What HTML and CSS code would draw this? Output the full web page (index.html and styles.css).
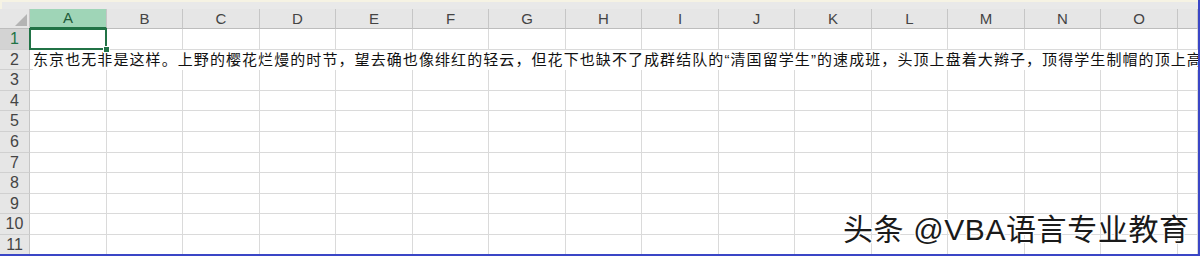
FILE: index.html
```html
<!DOCTYPE html>
<html lang="zh-CN">
    <head>
        <meta charset="UTF-8">
        <title>Sheet1</title>
        <link rel="stylesheet" href="styles.css">
    </head>

    <body>
        <div class="window">
            <div class="top-strip"></div>

            <div class="sheet" id="sheet"></div>

            <div class="watermark">头条 @VBA语言专业教育</div>
        </div>

        <script>
            let sheet = document.getElementById('sheet');
            let cols = ['A', 'B', 'C', 'D', 'E', 'F', 'G', 'H', 'I', 'J', 'K', 'L', 'M', 'N', 'O', ''];
            let text = '东京也无非是这样。上野的樱花烂熳的时节，望去确也像绯红的轻云，但花下也缺不了成群结队的“清国留学生”的速成班，头顶上盘着大辫子，顶得学生制帽的顶上高';

            function cell(cls, content) {
                let div = document.createElement('div');
                div.className = cls;
                if (content) div.textContent = content;
                sheet.appendChild(div);
                return div;
            }

            // header row
            cell('corner', '').appendChild(document.createElement('span')).className = 'triangle';
            cols.forEach((c, i) => cell(i == 0 ? 'col-head selected' : 'col-head', c));

            // rows
            for (let r = 1; r <= 11; r++) {
                cell(r == 1 ? 'row-head selected' : 'row-head', String(r));
                cols.forEach((c, i) => {
                    let div = cell('cell', '');
                    if (r == 1 && i == 0) {
                        div.classList.add('active');
                        div.appendChild(document.createElement('span')).className = 'handle';
                    }
                    if (r == 2 && i == 0) {
                        let span = document.createElement('span');
                        span.className = 'overflow';
                        span.textContent = text;
                        div.appendChild(span);
                    }
                });
            }
        </script>
    </body>
</html>
```

FILE: styles.css
```css
* {
    padding: 0;
    margin: 0;
    box-sizing: border-box;
}

body {
    width: 1200px;
    height: 256px;
    overflow: hidden;
    background: white;
    font-family: "Liberation Sans", "Noto Sans CJK SC", sans-serif;
}

.window {
    position: relative;
    width: 1200px;
    height: 256px;
    overflow: hidden;
    border-right: 2px solid #3a46c6;
    border-bottom: 2px solid #3a46c6;
    background: white;
}

.top-strip {
    height: 9px;
    background: #e9e9e9;
    border-top: 2px solid #f6f3e4;
    border-left: 2px solid #f6f3e4;
}

.sheet {
    display: grid;
    grid-template-columns: 30px repeat(7, 77px 76px) 77px 1fr;
    grid-template-rows: 20px repeat(11, 20.6px);
}

.corner {
    position: relative;
    background: #e6e6e6;
    border-right: 1px solid #c6c6c6;
    border-bottom: 1px solid #bdbdbd;
}

.triangle {
    position: absolute;
    right: 2px;
    bottom: 2px;
    width: 0;
    height: 0;
    border-left: 12px solid transparent;
    border-bottom: 12px solid #b4b4b4;
}

.col-head {
    background: #e6e6e6;
    border-right: 1px solid #c6c6c6;
    border-bottom: 1px solid #bdbdbd;
    color: #444;
    font-size: 15px;
    text-align: center;
    line-height: 19px;
}

.col-head.selected {
    background: #9fd5b7;
    border-bottom: 2px solid #217346;
    color: #1f5c3a;
    line-height: 18px;
}

.row-head {
    background: #e6e6e6;
    border-right: 1px solid #c6c6c6;
    border-bottom: 1px solid #d0d0d0;
    color: #444;
    font-size: 16px;
    text-align: center;
    line-height: 20px;
}

.row-head.selected {
    background: #d3d3d3;
    color: #217346;
}

.cell {
    position: relative;
    border-right: 1px solid #dadada;
    border-bottom: 1px solid #dadada;
}

.cell.active {
    border: 2px solid #217346;
    margin: -1px 0 0 -1px;
    z-index: 2;
}

.handle {
    position: absolute;
    right: -5px;
    bottom: -5px;
    width: 7px;
    height: 7px;
    background: #217346;
    border: 1px solid white;
}

.overflow {
    position: absolute;
    left: 3px;
    top: 0;
    white-space: nowrap;
    font-size: 15px;
    letter-spacing: 1.08px;
    line-height: 20px;
    color: #111;
    background: white;
    z-index: 1;
}

.watermark {
    position: absolute;
    left: 843px;
    top: 212px;
    font-size: 30px;
    letter-spacing: 0.6px;
    line-height: 36px;
    color: #1a1a1a;
    white-space: nowrap;
    text-shadow: 1px 1px 0 white, -1px -1px 0 white, 1px -1px 0 white, -1px 1px 0 white;
}
```
